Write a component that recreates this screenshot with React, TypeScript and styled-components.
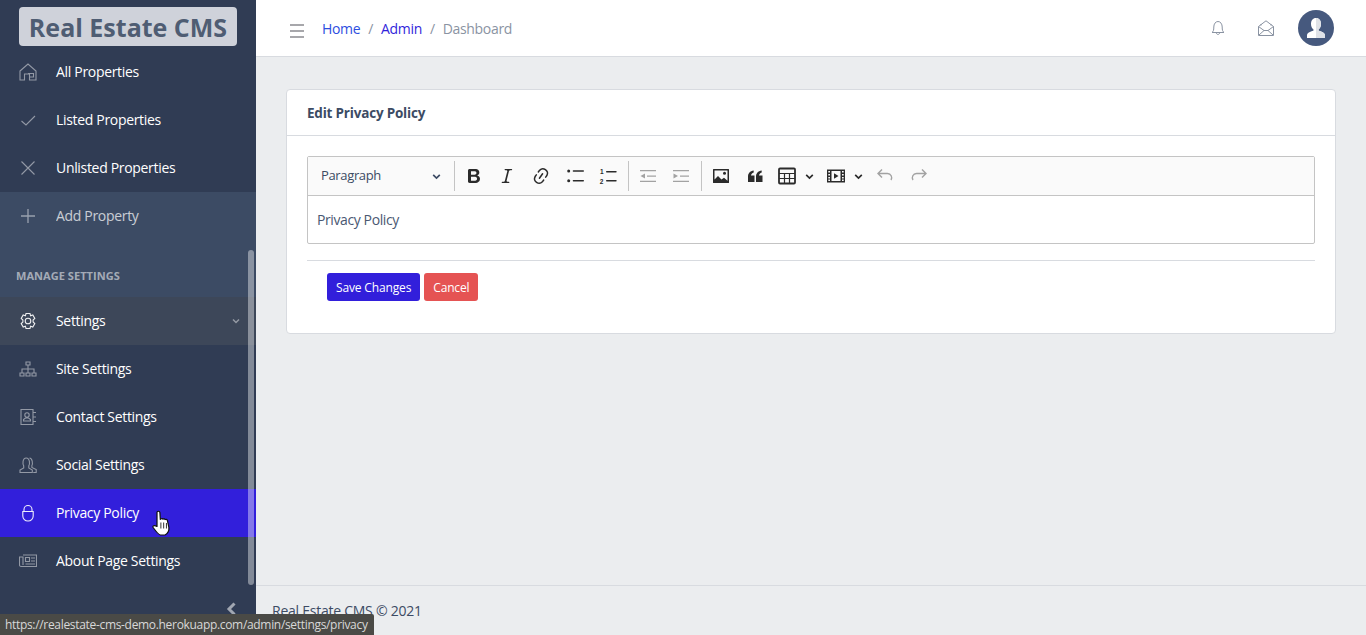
import React from "react";
import styled, { createGlobalStyle } from "styled-components";

const Global = createGlobalStyle`
  html, body { margin: 0; padding: 0; height: 100%; overflow: hidden; }
  body { font-family: "Open Sans", "Noto Sans", "Liberation Sans", sans-serif; font-size: 14px; color: #3c4b64; background: #ebedef; }
  * { box-sizing: border-box; }
`;

const Shell = styled.div`
  position: relative;
  display: flex;
  width: 1366px;
  height: 635px;
  overflow: hidden;
`;
const Sidebar = styled.aside`
  position: relative;
  width: 256px;
  flex: none;
  display: flex;
  flex-direction: column;
  background: #303c54;
  color: #fff;
`;
const Brand = styled.div`
  height: 48px;
  flex: none;
  padding: 7px 19px 2px;
`;
const BrandBox = styled.div`
  height: 39px;
  width: 218px;
  background: #cfd2da;
  border-radius: 4px;
  display: flex;
  align-items: center;
  justify-content: center;
  color: #4f5d73;
  font-size: 25px;
  font-weight: 700;
  white-space: nowrap;
`;
const Nav = styled.nav`
  flex: 1;
  display: flex;
  flex-direction: column;
`;
const Tone = styled.div`
  background: #3c4b64;
`;
const Item = styled.a<{ $active?: boolean; $open?: boolean }>`
  height: 48px;
  display: flex;
  align-items: center;
  padding-left: 19px;
  font-size: 14px;
  letter-spacing: -0.32px;
  color: #fff;
  background: ${(p) => (p.$active ? "#321fdb" : p.$open ? "#3d4759" : "transparent")};
  white-space: nowrap;
  svg { color: ${(p) => (p.$active || p.$open ? "rgba(255,255,255,.92)" : "rgba(255,255,255,.48)")}; }
`;
const IconSlot = styled.span`
  width: 37px;
  flex: none;
  display: flex;
  align-items: center;
`;
const Label = styled.span<{ $dim?: boolean }>`
  flex: 1;
  margin-top: -2px;
  opacity: ${(p) => (p.$dim ? 0.72 : 1)};
`;
const Caret = styled.span`
  width: 41px;
  flex: none;
  padding-left: 16px;
  display: flex;
  svg { color: rgba(255,255,255,.45); }
`;
const Section = styled.div`
  height: 57px;
  padding: 29px 16px 0;
  font-size: 11px;
  line-height: 14px;
  font-weight: 700;
  letter-spacing: 0.05px;
  color: rgba(255,255,255,.55);
`;
const SideFoot = styled.div`
  height: 50px;
  flex: none;
  display: flex;
  justify-content: flex-end;
  padding: 17px 19px 0 0;
  svg { color: rgba(255,255,255,.55); }
`;
const Scrollbar = styled.div`
  position: absolute;
  left: 248px;
  top: 250px;
  width: 6px;
  height: 335px;
  border-radius: 3px;
  background: rgba(255,255,255,.4);
`;
const Wrapper = styled.div`
  flex: 1;
  display: flex;
  flex-direction: column;
  min-width: 0;
`;
const Header = styled.header`
  height: 57px;
  flex: none;
  background: #fff;
  border-bottom: 1px solid #d8dbe0;
  display: flex;
  align-items: center;
  padding: 0 32px 0 34px;
`;
const Burger = styled.svg`
  margin-top: 6px;
  flex: none;
`;
const Crumbs = styled.ol`
  flex: 1;
  list-style: none;
  margin: 0 0 0 18px;
  padding: 0;
  display: flex;
  align-items: center;
  gap: 8px;
  font-size: 14px;
  letter-spacing: -0.33px;
`;
const Crumb = styled.li<{ $color: string }>`
  color: ${(p) => p.$color};
`;
const HeadIcons = styled.div`
  display: flex;
  align-items: center;
  color: #8a93a2;
`;
const HeadIcon = styled.span`
  width: 48px;
  display: flex;
  justify-content: center;
`;
const Avatar = styled.span`
  margin-left: 8px;
  width: 36px;
  height: 36px;
  border-radius: 50%;
  background: #46597e;
  display: flex;
  align-items: center;
  justify-content: center;
  overflow: hidden;
`;
const Main = styled.main`
  flex: 1;
  padding: 32px 30px 0 30px;
`;
const Card = styled.section`
  background: #fff;
  border: 1px solid #d8dbe0;
  border-radius: 4px;
  height: 245px;
`;
const CardHead = styled.div`
  height: 46px;
  padding: 0 20px;
  display: flex;
  align-items: center;
  border-bottom: 1px solid #d8dbe0;
  font-size: 13.5px;
  font-weight: 700;
  letter-spacing: -0.2px;
`;
const CardBody = styled.div`
  padding: 20px;
`;
const Editor = styled.div`
  border: 1px solid #c4c4c4;
  border-radius: 2px;
  height: 88px;
  display: flex;
  flex-direction: column;
`;
const Toolbar = styled.div`
  height: 39px;
  flex: none;
  background: #fafafa;
  border-bottom: 1px solid #c4c4c4;
  display: flex;
  align-items: center;
  color: #2b2b2b;
`;
const Dropdown = styled.div`
  width: 143px;
  padding: 0 9px 0 13px;
  display: flex;
  align-items: center;
  justify-content: space-between;
  font-size: 13px;
  letter-spacing: -0.35px;
  color: #3c4b64;
`;
const DropText = styled.span`
  margin-top: -2px;
`;
const Sep = styled.span`
  width: 1px;
  height: 30px;
  margin: 0 2px 0 3px;
  background: #c4c4c4;
  flex: none;
`;
const Tool = styled.span<{ $off?: boolean; $w?: number; $ml?: number }>`
  width: ${(p) => p.$w ?? 33.6}px;
  margin-left: ${(p) => p.$ml ?? 0}px;
  flex: none;
  display: flex;
  align-items: center;
  justify-content: center;
  opacity: ${(p) => (p.$off ? 0.42 : 1)};
`;
const EditArea = styled.div`
  flex: 1;
  padding: 0 9px;
  display: flex;
  align-items: center;
  font-size: 14px;
  letter-spacing: -0.4px;
  color: #4a5872;
`;
const Rule = styled.hr`
  margin: 16px 0 12px;
  border: 0;
  border-top: 1px solid #d8dbe0;
`;
const Actions = styled.div`
  display: flex;
  gap: 4px;
  padding-left: 20px;
`;
const Btn = styled.button<{ $bg: string }>`
  height: 28px;
  padding: 0 9px;
  border: 0;
  border-radius: 3px;
  background: ${(p) => p.$bg};
  color: #fff;
  font-family: inherit;
  font-size: 12px;
  letter-spacing: -0.15px;
`;
const Footer = styled.footer`
  height: 50px;
  flex: none;
  border-top: 1px solid #d8dbe0;
  padding: 15px 16px 0;
  font-size: 14px;
  letter-spacing: -0.25px;
  line-height: 20px;
`;
const StatusBar = styled.div`
  position: absolute;
  left: 0;
  bottom: 0;
  width: 374px;
  height: 21px;
  background: #4a4a46;
  color: #d8d8d8;
  font-size: 12px;
  letter-spacing: -0.32px;
  line-height: 21px;
  padding-left: 5px;
  border-top-right-radius: 2px;
  white-space: nowrap;
`;
const Pointer = styled.svg`
  position: absolute;
  left: 152px;
  top: 510px;
`;

type S = { s?: number };
const Ic = ({ children, s = 18, vb = 18 }: { children: React.ReactNode; s?: number; vb?: number }) => (
  <svg width={s} height={s} viewBox={`0 0 ${vb} ${vb}`} fill="none" stroke="currentColor" strokeWidth="1.1">{children}</svg>
);
const Home = () => <Ic><path d="M1 8 9 1l8 7v9H10.500v-6H5.500v6H1zM9 10.500h5.500v3.500H10" /></Ic>;
const Check = () => <Ic><path d="M2.500 10l4.500 4L16 5" /></Ic>;
const Cross = () => <Ic><path d="M2.500 2.500l13 13M15.500 2.500l-13 13" /></Ic>;
const Plus = () => <Ic><path d="M9 2v14M2 9h14" strokeWidth="1.300" /></Ic>;
const Gear = () => <Ic><path d="M7 1.500h4l.6 2.300 2.200-.8 2 3.400-1.700 1.600v2l1.700 1.600-2 3.400-2.200-.8-.6 2.300H7l-.6-2.300-2.200.8-2-3.400L3.900 10V8L2.200 6.400l2-3.400 2.200.8z" /><circle cx="9" cy="9" r="2.800" /></Ic>;
const Site = () => <Ic><path d="M7 2h4v3H7zM1 13h4v3H1zM7 13h4v3H7zM13 13h4v3h-4zM9 5v8M3 13v-4h12v4" /></Ic>;
const Address = () => <Ic><path d="M2 1.500h12v15H2zM14 4.500h3M14 9h3M14 13.500h3M4.500 13v-1.500l2-1.500h3l2 1.500V13z" /><circle cx="8" cy="7" r="2.200" /></Ic>;
const People = () => <Ic><path d="M1 16.500v-2.500l3.700-2V9.800C3.600 8.500 3.300 2 7.200 2s3.700 6.500 2.600 7.800V12l3.500 2v2.500zM10.500 2c3 .2 3.400 5.700 2.400 7.500V11.500l4.300 2v3h-3" /></Ic>;
const Lock = () => <Ic><path d="M5 7.500V5.500a4 4 0 0 1 8 0v2M3.800 7.500h10.400V12a5.200 5 0 0 1-10.400 0z" /></Ic>;
const News = () => <Ic><path d="M4 3h13.500v11.500H2a1.500 1.500 0 0 1-1.500-1.500V5H4v8M6.500 5.500h4v4h-4zM12 6h4M12 9h4M6.500 12H16" /></Ic>;
const Chevron = ({ s = 10 }: S) => <svg width={s} height={s} viewBox="0 0 10 10" fill="none" stroke="currentColor" strokeWidth="1.500"><path d="M2 3.500 5 6.500l3-3" /></svg>;
const Fill = ({ d }: { d: string }) => <svg width="20" height="20" viewBox="0 0 20 20" fill="currentColor"><path d={d} /></svg>;

export default function App() {
  return (
    <Shell>
      <Global />
      <Sidebar>
        <Brand><BrandBox>Real Estate CMS</BrandBox></Brand>
        <Nav>
          <Item><IconSlot><Home /></IconSlot><Label>All Properties</Label></Item>
          <Item><IconSlot><Check /></IconSlot><Label>Listed Properties</Label></Item>
          <Item><IconSlot><Cross /></IconSlot><Label>Unlisted Properties</Label></Item>
          <Tone>
            <Item><IconSlot><Plus /></IconSlot><Label $dim>Add Property</Label></Item>
            <Section>MANAGE SETTINGS</Section>
          </Tone>
          <Item $open><IconSlot><Gear /></IconSlot><Label>Settings</Label><Caret><Chevron /></Caret></Item>
          <Item><IconSlot><Site /></IconSlot><Label>Site Settings</Label></Item>
          <Item><IconSlot><Address /></IconSlot><Label>Contact Settings</Label></Item>
          <Item><IconSlot><People /></IconSlot><Label>Social Settings</Label></Item>
          <Item $active><IconSlot><Lock /></IconSlot><Label>Privacy Policy</Label></Item>
          <Item><IconSlot><News /></IconSlot><Label>About Page Settings</Label></Item>
        </Nav>
        <SideFoot>
          <svg width="12" height="14" viewBox="0 0 12 14" fill="none" stroke="currentColor" strokeWidth="3"><path d="M9.500 1.500 4 7l5.500 5.500" /></svg>
        </SideFoot>
        <Scrollbar />
      </Sidebar>
      <Wrapper>
        <Header>
          <Burger width="14" height="14" viewBox="0 0 14 14" fill="none" stroke="#8a8a90" strokeWidth="1.500"><path d="M0 1h14M0 7h14M0 13h14" /></Burger>
          <Crumbs>
            <Crumb $color="#2d4ee0">Home</Crumb>
            <Crumb $color="#8a93a2">/</Crumb>
            <Crumb $color="#321fdb">Admin</Crumb>
            <Crumb $color="#8a93a2">/</Crumb>
            <Crumb $color="#8a93a2">Dashboard</Crumb>
          </Crumbs>
          <HeadIcons>
            <HeadIcon>
              <svg width="16" height="16" viewBox="0 0 16 16" fill="none" stroke="currentColor"><path d="M2 12.500c1.500-1 1.800-2.500 1.800-5.500C3.800 4 5.500 1.500 8 1.500S12.200 4 12.200 7c0 3 .3 4.500 1.800 5.500zM6.300 12.500c0 2.600 3.400 2.600 3.400 0" /></svg>
            </HeadIcon>
            <HeadIcon>
              <svg width="16" height="16" viewBox="0 0 16 16" fill="none" stroke="currentColor"><path d="M.5 6.500 8 .8l7.500 5.700v9H.500zM.5 6.500 6 10.500M15.500 6.500 10 10.500M1 15l5-4.500h4l5 4.500M3 5.500V4M13 5.500V4" /></svg>
            </HeadIcon>
            <Avatar>
              <svg width="36" height="36" viewBox="0 0 36 36"><path d="M18 8c3.200 0 5 2.500 5 6 0 2.400-1 4.300-2.400 5.300v1.500c3.400.8 6.400 2.200 6.400 4.700V28H9v-2.500c0-2.500 3-3.900 6.400-4.700v-1.500C14 18.300 13 16.400 13 14c0-3.500 1.800-6 5-6z" fill="#fff" /><path d="M18 8c3.200 0 5 2.500 5 6 0 2.400-1 4.300-2.400 5.300v1.500c3.400.8 6.400 2.200 6.400 4.700V28h-9z" fill="#dfe2e7" /></svg>
            </Avatar>
          </HeadIcons>
        </Header>
        <Main>
          <Card>
            <CardHead>Edit Privacy Policy</CardHead>
            <CardBody>
              <Editor>
                <Toolbar>
                  <Dropdown><DropText>Paragraph</DropText><Chevron s={11} /></Dropdown>
                  <Sep />
                  <Tool><Fill d="M10.187 17H5.773c-.637 0-1.092-.138-1.364-.415-.273-.277-.409-.718-.409-1.323V4.738c0-.617.14-1.062.419-1.332.279-.27.73-.406 1.354-.406h4.680c.69 0 1.288.041 1.793.124.506.083.96.242 1.360.478.341.197.644.447.906.75a3.262 3.262 0 0 1 .808 2.162c0 1.401-.722 2.426-2.167 3.075C15.050 10.175 16 11.315 16 13.010a3.756 3.756 0 0 1-2.296 3.504 6.100 6.100 0 0 1-1.517.377c-.571.073-1.238.110-2 .110zm-.217-6.217H7v4.087h3.069c1.977 0 2.965-.69 2.965-2.072 0-.707-.256-1.220-.768-1.537-.512-.319-1.277-.478-2.296-.478zM7 5.130v3.619h2.606c.729 0 1.292-.067 1.690-.2a1.600 1.600 0 0 0 .91-.765c.165-.267.247-.566.247-.897 0-.707-.26-1.176-.778-1.409-.519-.232-1.310-.348-2.375-.348H7z" /></Tool>
                  <Tool><Fill d="m9.586 14.633.021.004c-.036.335.095.655.393.962.082.083.173.15.274.201h1.474a.6.6 0 1 1 0 1.200H5.304a.6.6 0 0 1 0-1.200h1.150c.474-.07.809-.182 1.005-.334.157-.122.291-.32.404-.597l2.416-9.550a1.053 1.053 0 0 0-.281-.823 1.120 1.120 0 0 0-.442-.296H8.150a.6.6 0 0 1 0-1.200h6.443a.6.6 0 1 1 0 1.200h-1.195c-.376.056-.650.155-.823.296-.215.175-.423.439-.623.790l-2.366 9.347z" /></Tool>
                  <Tool><Fill d="m11.077 15 .991-1.416a.75.75 0 1 1 1.229.86l-1.148 1.640a.748.748 0 0 1-.217.206 5.251 5.251 0 0 1-8.503-5.955.741.741 0 0 1 .12-.274l1.147-1.639a.75.75 0 1 1 1.228.86L4.933 10.700l.006.003a3.750 3.750 0 0 0 6.132 4.294l.006.004zm5.494-5.335a.748.748 0 0 1-.12.274l-1.147 1.639a.75.75 0 1 1-1.228-.86l.86-1.230a3.750 3.750 0 0 0-6.144-4.301l-.86 1.229a.75.75 0 0 1-1.229-.86l1.148-1.640a.748.748 0 0 1 .217-.206 5.251 5.251 0 0 1 8.503 5.955zm-4.563-2.532a.75.75 0 0 1 .184 1.045l-3.155 4.505a.75.75 0 1 1-1.229-.86l3.155-4.506a.75.75 0 0 1 1.045-.184z" /></Tool>
                  <Tool><svg width="20" height="20" viewBox="0 0 20 20" fill="currentColor"><circle cx="3.700" cy="5" r="1.500" /><circle cx="3.700" cy="14.700" r="1.500" /><rect x="7.700" y="4.300" width="11.300" height="1.400" rx=".7" /><rect x="7.700" y="14" width="11.300" height="1.400" rx=".7" /></svg></Tool>
                  <Tool><svg width="20" height="20" viewBox="0 0 20 20" fill="currentColor"><text x="2" y="8" fontSize="6.500" fontWeight="700" fontFamily="Liberation Sans, sans-serif">1</text><text x="1.800" y="18" fontSize="6.500" fontWeight="700" fontFamily="Liberation Sans, sans-serif">2</text><rect x="8" y="5" width="10.700" height="1.400" rx=".7" /><rect x="8" y="14" width="10.700" height="1.400" rx=".7" /></svg></Tool>
                  <Sep />
                  <Tool $off><svg width="20" height="20" viewBox="0 0 20 20" fill="currentColor"><path d="M2 4h16v1.300H2zM2 14.700h16V16H2zM9 9.400h9v1.300H9zM7 7.500v5L2.500 10z" /></svg></Tool>
                  <Tool $off><svg width="20" height="20" viewBox="0 0 20 20" fill="currentColor"><path d="M2 4h16v1.300H2zM2 14.700h16V16H2zM9 9.400h9v1.300H9zM2.500 7.500v5L7 10z" /></svg></Tool>
                  <Sep />
                  <Tool><svg width="20" height="20" viewBox="0 0 20 20" fill="currentColor"><path fillRule="evenodd" d="M2.500 3h15a.5.5 0 0 1 .5.500v13a.5.5 0 0 1-.5.500h-15a.5.5 0 0 1-.5-.5v-13a.5.5 0 0 1 .5-.5zM3.500 4.500v9l3.500-3.500 3.500 3.500 2.500-1.800 3.500 3V4.500z" /><circle cx="13.500" cy="7.300" r="1.500" /></svg></Tool>
                  <Tool><svg width="20" height="20" viewBox="0 0 20 20" fill="currentColor"><path d="M3 16V10.500C3 7.500 5 5 8.700 4.500v2C6.900 7 6.300 8 6 9.500H9.500V16zM11 16v-5.500C11 7.500 13 5 16.700 4.500v2C14.900 7 14.300 8 14 9.500H17.500V16z" /></svg></Tool>
                  <Tool $w={20} $ml={6}><svg width="20" height="20" viewBox="0 0 20 20" fill="none" stroke="currentColor"><rect x="2" y="2.500" width="16" height="15" rx="1" strokeWidth="1.800" /><path d="M2 7.500h16M2 12.500h16M7.500 7v10M12.500 7v10" strokeWidth="1.200" /></svg></Tool>
                  <Tool $w={24}><Chevron s={11} /></Tool>
                  <Tool $w={20} $ml={5}><svg width="20" height="20" viewBox="0 0 20 20" fill="currentColor"><path fillRule="evenodd" d="M1 3.500h18v13H1zM5.500 5v10h9V5zM2.300 5v1.500h1.700V5zm0 3v1.500h1.700V8zm0 3v1.500h1.700V11zm0 2.500V15h1.700v-1.500zM16 5v1.500h1.700V5zm0 3v1.500h1.700V8zm0 3v1.500h1.700V11zm0 2.500V15h1.700v-1.500z" /><path d="M8 7.200 12.500 10 8 12.800z" /></svg></Tool>
                  <Tool $w={24}><Chevron s={11} /></Tool>
                  <Tool $off $w={30}><svg width="20" height="20" viewBox="0 0 20 20" fill="none" stroke="currentColor" strokeWidth="1.400"><path d="M7 3.500 3 7.500 7 11.500M3 7.500h9.500a4.200 4.200 0 0 1 3.500 6.500" /></svg></Tool>
                  <Tool $off $ml={2}><svg width="20" height="20" viewBox="0 0 20 20" fill="none" stroke="currentColor" strokeWidth="1.400"><path d="M13 3.500l4 4-4 4M17 7.500H7.500a4.200 4.200 0 0 0-3.500 6.500" /></svg></Tool>
                </Toolbar>
                <EditArea>Privacy Policy</EditArea>
              </Editor>
              <Rule />
              <Actions>
                <Btn $bg="#321fdb">Save Changes</Btn>
                <Btn $bg="#e55353">Cancel</Btn>
              </Actions>
            </CardBody>
          </Card>
        </Main>
        <Footer>Real Estate CMS © 2021</Footer>
      </Wrapper>
      <StatusBar>https://realestate-cms-demo.herokuapp.com/admin/settings/privacy</StatusBar>
      <Pointer width="20" height="27" viewBox="0 0 18 27" preserveAspectRatio="none">
        <path d="M4.500 2c.8-1.200 2.300-1 2.600.4l.4 7 .6-.5c.5-.5 1.500-.4 1.800.3.600-.5 1.600-.4 1.900.4.700-.5 1.700-.3 2 .6l1.400 7.300c.3 3-1 6-3.500 7.500H7.500C5.500 24.500 3 20.500 1 17.500c-.7-1.500.8-2.800 3.500-1z" fill="#fff" stroke="#111" strokeWidth="1.100" strokeLinejoin="round" />
        <path d="M8 12.500v6M10.500 12.500v6M13 13v5.500" stroke="#111" strokeWidth=".8" />
      </Pointer>
    </Shell>
  );
}
